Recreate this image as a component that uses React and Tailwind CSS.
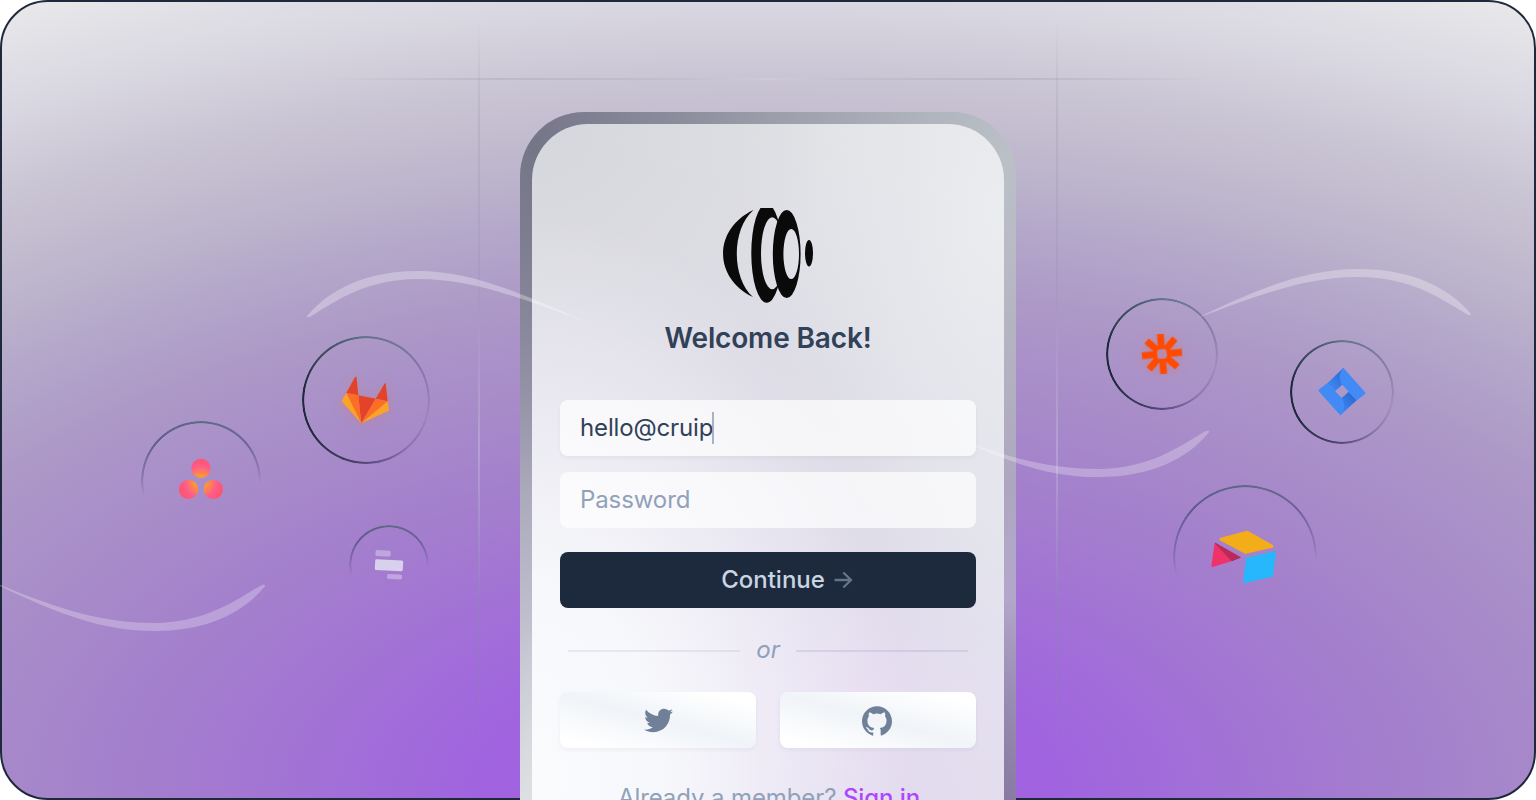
import React from "react";
import { FaTwitter } from "react-icons/fa";
import { SiGithub } from "react-icons/si";

const fullRing =
  "absolute rounded-full bg-[conic-gradient(from_0deg,#64748b_0deg,rgba(100,90,140,0.5)_60deg,rgba(100,90,140,0.14)_105deg,rgba(80,70,120,0.35)_140deg,rgba(60,52,92,0.8)_185deg,#1e293b_240deg,#1e293b_280deg,#64748b_360deg)] [mask:radial-gradient(closest-side,transparent_calc(100%_-_2.6px),#000_calc(100%_-_1.9px))]";
const halfRing =
  "absolute rounded-full bg-[conic-gradient(from_0deg,#5d6b86_0deg,rgba(93,85,140,0.75)_50deg,rgba(93,85,140,0.3)_80deg,transparent_92deg,transparent_255deg,rgba(93,85,140,0.4)_272deg,rgba(80,80,130,0.8)_310deg,#5d6b86_360deg)] [mask:radial-gradient(closest-side,transparent_calc(100%_-_2.6px),#000_calc(100%_-_1.9px))]";

function Logo() {
  return (
    <svg className="h-24 w-24" viewBox="720 208 96 96" fill="#0a0a0a" fillRule="evenodd">
      <path d="M753.5 210C713 229 713 278 753 297C731.3 278 731.3 229 753.5 210Z" />
      <path d="M751.3 253.3a15.4 49.5 0 1 0 30.8 0a15.4 49.5 0 1 0 -30.8 0ZM761 253.3a11.2 36 0 1 0 22.4 0a11.2 36 0 1 0 -22.4 0Z" clipPath="url(#logoClip)" />
      <path d="M772.8 254a13.9 44 0 1 0 27.8 0a13.9 44 0 1 0 -27.8 0ZM783.4 254a7.8 25 0 1 0 15.6 0a7.8 25 0 1 0 -15.6 0Z" />
      <ellipse cx="809" cy="253.2" rx="4" ry="13.2" />
      <clipPath id="logoClip">
        <path d="M720 208H778V216L780 220V290L778 295V304H720Z" />
      </clipPath>
    </svg>
  );
}

function Brands() {
  return (
    <svg className="absolute inset-0 h-full w-full" viewBox="0 0 1536 800">
      <defs>
        <radialGradient id="as" gradientUnits="userSpaceOnUse" cx="201" cy="482" r="25">
          <stop offset="0.15" stopColor="#ffa51f" />
          <stop offset="0.65" stopColor="#fd5b8c" />
          <stop offset="1" stopColor="#ff5263" />
        </radialGradient>
        <linearGradient id="jd" x1="0" y1="1" x2="1" y2="0">
          <stop offset="0.2" stopColor="#3e86ef" />
          <stop offset="1" stopColor="#2263d0" />
        </linearGradient>
      </defs>
      <g className="drop-shadow-[0_2px_6px_rgba(252,109,38,0.25)]">
        <path fill="#e24329" d="M356.5 376.8 358.3 395.3 346.3 393 355 377ZM385.7 383.3 387.7 401.3 375.7 398.7 384.6 383.6ZM358.3 395.3 375.7 398.7 361.3 423.3Z" />
        <path fill="#fc6d26" d="M346.3 393 358.3 395.3 361.3 423.3ZM375.7 398.7 387.7 401.3 361.3 423.3Z" />
        <path fill="#fca326" d="M346.3 393 341.6 401.3 361.3 423.3ZM387.7 401.3 389 410.6 361.3 423.3Z" />
      </g>
      <g fill="url(#as)">
        <circle cx="201" cy="468.4" r="9.6" />
        <circle cx="188.5" cy="489.4" r="9.6" />
        <circle cx="213.4" cy="489.4" r="9.6" />
      </g>
      <g fill="#d9d1ec">
        <rect x="375.5" y="550.4" width="15.200" height="6" rx="1.5" opacity=".5" transform="rotate(3 383 553)" />
        <rect x="375" y="559.9" width="28" height="10.8" rx="1.5" transform="rotate(3 389 565)" />
        <rect x="387" y="574.2" width="15" height="5" rx="1.5" opacity=".5" transform="rotate(3 394 577)" />
      </g>
      <g transform="translate(1162 354) rotate(-5)" fill="#ff4a00" className="drop-shadow-[0_1px_6px_rgba(255,74,0,0.22)]">
        {[0, 45, 90, 135, 180, 225, 270, 315].map((a) => (
          <rect key={a} x="-3.4" y="-20.1" width="6.8" height="14" rx=".5" transform={`rotate(${a})`} />
        ))}
        <rect x="-6.3" y="-6.3" width="12.6" height="12.6" rx="4" fill="none" stroke="#ff4a00" strokeWidth="3" />
      </g>
      <g>
        <path fill="url(#jd)" d="M1343.3 368 1327.3 383.3 1335 391.3 1342.3 384.7 1346 376Z" />
        <path fill="url(#jd)" d="M1348.7 391.7 1341.7 398 1338 408 1340.3 415.3 1356.7 400.2Z" />
        <path fill="#428af5" d="M1343.5 367.9 1365 392.2Q1365.8 393.3 1365 394L1356.7 400.4 1342.3 384.7C1338.6 380 1339 371.5 1343.5 367.9Z" />
        <path fill="#428af5" d="M1340.5 415.4 1319 391.4Q1318.2 390.3 1319 389.6L1327.3 382.9 1341.7 398C1345.4 403 1345 411.5 1340.5 415.4Z" />
      </g>
      <g strokeLinejoin="round" strokeWidth="3">
        <path fill="#f2ad18" stroke="#f2ad18" d="M1221 539.2 1247.3 532.2 1272 546.3 1245.7 552.4Z" />
        <path fill="#27b7fc" stroke="#27b7fc" strokeWidth="2" d="M1247 558.6 1275 552.2 1272 575.8 1244 582.3Z" />
        <path fill="#f0326b" stroke="#f0326b" strokeWidth="2" d="M1215.5 544 1231 560.2 1212.4 566Z" />
        <path fill="#b92a58" stroke="#b92a58" strokeWidth="1" d="M1215.3 543.2 1240.4 557.4 1231.7 560.8Z" />
      </g>
    </svg>
  );
}

function Swooshes() {
  return (
    <svg className="absolute inset-0 h-full w-full" viewBox="0 0 1536 800">
      <path fill="#fff" fillOpacity=".3" d="M307.500 315.500C330 289 367 271 418 271C475 271 528 297 588 322.5C528 301 475 279 418 279C368 279 339 299 313 315C308 318.500 306 317.500 307.500 315.500Z" />
      <path fill="#fff" fillOpacity=".3" d="M1470.800 313.500C1448 287 1411 269 1358 269C1303 269 1254 291 1196 318.500C1254 297 1303 277 1358 277C1410 277 1438 297 1465 313C1470 316.500 1471.800 315 1470.800 313.500Z" />
      <path fill="#fff" fillOpacity=".26" d="M1208.800 432.500C1187 459 1151 477 1098 477C1052 477 1012 464 962 440C1012 459 1052 469 1098 469C1146 469 1176 449 1203 432.500C1208 429.500 1209.800 431 1208.800 432.500Z" />
      <path fill="#fff" fillOpacity=".26" d="M264.800 586.500C243 613 207 631 154 631C106 631 62 616 0 586V584.800C62 611 106 623 154 623C202 623 232 603 259 586.500C264 583.500 265.800 585 264.800 586.500Z" />
    </svg>
  );
}

export default function App() {
  return (
    <main className="relative grid h-[800px] w-[1536px] grid-cols-1 grid-rows-1 overflow-hidden bg-white font-['Inter',sans-serif]">
      <section className="relative col-start-1 row-start-1 overflow-hidden rounded-[48px] border-2 border-[#1e293b] bg-[radial-gradient(1475px_768px_at_50%_100%,#a161e2_0%,#a163e0_19%,#a16adb_25%,#a275d3_34%,#a480cc_44%,#a88dc9_56%,#ad99c7_67%,#b4a8ca_76%,#bfb8cd_85%,#cac5d4_94%,#d8d6e0_103%,#ebebec_117%)]">
        <div className="absolute -inset-0.5">
          <div className="absolute left-[478px] top-5 h-[780px] w-0.5 bg-[linear-gradient(transparent,rgba(150,145,172,0.24)_12%,rgba(150,145,180,0.26)_35%,rgba(200,190,225,0.45)_55%,rgba(140,130,180,0.35)_75%,transparent)]" />
          <div className="absolute left-[1056px] top-5 h-[780px] w-0.5 bg-[linear-gradient(transparent,rgba(150,145,172,0.24)_12%,rgba(150,145,180,0.26)_35%,rgba(200,190,225,0.45)_55%,rgba(140,130,180,0.35)_75%,transparent)]" />
          <div className="absolute left-80 top-[78px] h-0.5 w-[896px] bg-[linear-gradient(90deg,transparent,rgba(140,140,160,0.25)_20%,rgba(160,160,180,0.22)_38%,rgba(215,215,228,0.3)_50%,rgba(160,160,180,0.22)_62%,rgba(140,140,160,0.25)_80%,transparent)]" />
          <div className={`${fullRing} left-[302px] top-[336px] h-32 w-32`} />
          <div className={`${halfRing} left-[141px] top-[421px] h-[120px] w-[120px]`} />
          <div className={`${halfRing} left-[349px] top-[525px] h-20 w-20`} />
          <div className={`${fullRing} left-[1106px] top-[298px] h-28 w-28`} />
          <div className={`${fullRing} left-[1290px] top-[340px] h-[104px] w-[104px]`} />
          <div className={`${halfRing} left-[1173px] top-[485px] h-36 w-36`} />
          <Brands />
        </div>
      </section>

      <div className="z-10 col-start-1 row-start-1 flex justify-center pt-28">
        <div className="h-[720px] w-[496px] rounded-t-[64px] bg-[conic-gradient(from_0deg_at_50%_55%,#9b9da9_0deg,#bbc0c7_34deg,#b4b3c1_55deg,#aea6c0_85deg,#b3a7cb_110deg,#8678a0_142deg,#d0d0d8_190deg,#dde0e2_220deg,#bcbccb_248deg,#aaa9ba_275deg,#8a899d_305deg,#757588_327deg,#9b9da9_360deg)] p-3 pb-0">
          <div className="h-full rounded-t-[56px] bg-[radial-gradient(380px_560px_at_0%_92%,#f9fbfd_0%,rgba(248,250,252,0.92)_35%,rgba(244,243,250,0.6)_65%,rgba(240,238,248,0)_100%),radial-gradient(300px_260px_at_0%_0%,#d6d7dc,rgba(214,215,220,0)),radial-gradient(260px_420px_at_100%_12%,#eaecef,rgba(234,236,239,0)),radial-gradient(160px_500px_at_104%_50%,rgba(228,230,238,0.8),rgba(228,230,238,0)),linear-gradient(#dfe0e4_0%,#dcdbe5_35%,#dedbe8_58%,#e5dbf0_80%,#e2daee_100%)] px-7">
            <div className="flex justify-center pt-[84px]">
              <Logo />
            </div>
            <h1 className="mt-4 text-center text-[28px] font-semibold leading-9 tracking-[-0.15px] text-slate-700">Welcome Back!</h1>
            <form className="mt-11 flex flex-col">
              <div className="flex h-14 items-center rounded-lg bg-white/70 px-5 text-2xl tracking-[-0.15px] text-slate-700 shadow-[0_2px_4px_rgba(30,41,59,0.05)]">
                <span>hello@cruip</span>
                <span className="-ml-px h-8 w-0.5 bg-slate-400/80" />
              </div>
              <div className="mt-4 flex h-14 items-center rounded-lg bg-white/70 px-5 text-2xl tracking-[-0.1px] text-slate-400">Password</div>
              <button type="button" className="mt-6 flex h-14 items-center justify-center gap-2 rounded-lg bg-slate-800 pl-[38px] text-2xl font-medium text-slate-300">
                Continue
                <svg className="h-[18px] w-5" viewBox="0 0 20 18" fill="none" stroke="#64748b" strokeWidth="2.300">
                  <path d="M1.500 9H18M10.300 1.500L18 9L10.300 16.500" />
                </svg>
              </button>
            </form>
            <div className="mt-6 flex h-9 items-center gap-4 px-2">
              <span className="mt-0.5 h-0.5 flex-1 bg-[#8f84c0]/15" />
              <span className="text-2xl italic text-slate-400">or</span>
              <span className="mt-0.5 h-0.5 flex-1 bg-[#8f84c0]/20" />
            </div>
            <div className="mt-6 grid grid-cols-2 gap-6 text-slate-500">
              <div className="flex h-14 items-center justify-center rounded-lg bg-[linear-gradient(195deg,#fff_12%,#f0f4f8_50%,#fff_90%)] pl-px shadow-[0_2px_4px_rgba(30,41,59,0.05)]">
                <FaTwitter size={29} className="opacity-90" />
              </div>
              <div className="flex h-14 items-center justify-center rounded-lg bg-[linear-gradient(195deg,#fff_12%,#f0f4f8_50%,#fff_90%)] pr-0.5 pt-px shadow-[0_2px_4px_rgba(30,41,59,0.05)]">
                <SiGithub size={30} className="opacity-90" />
              </div>
            </div>
            <p className="mt-[34px] whitespace-nowrap pl-0.5 text-center text-2xl tracking-[-0.1px] text-slate-400">
              Already a member? <a className="font-medium text-purple-500">Sign in</a>
            </p>
          </div>
        </div>
      </div>
      <div className="pointer-events-none absolute inset-0 z-20">
        <Swooshes />
      </div>
    </main>
  );
}
